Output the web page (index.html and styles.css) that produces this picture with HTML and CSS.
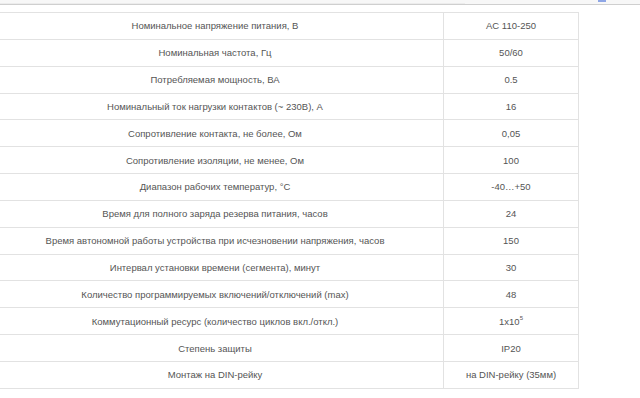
FILE: index.html
```html
<!DOCTYPE html>
<html lang="ru">
<head>
<meta charset="utf-8">
<link rel="stylesheet" href="styles.css">
</head>
<body>
<div class="topbar"><span class="tab"></span><span class="marker"></span></div>
<div class="content">
<table class="specs">
<tr><td>Номинальное напряжение питания, В</td><td>AC 110-250</td></tr>
<tr><td>Номинальная частота, Гц</td><td>50/60</td></tr>
<tr><td>Потребляемая мощность, ВА</td><td>0.5</td></tr>
<tr><td>Номинальный ток нагрузки контактов (~ 230В), А</td><td>16</td></tr>
<tr><td>Сопротивление контакта, не более, Ом</td><td>0,05</td></tr>
<tr><td>Сопротивление изоляции, не менее, Ом</td><td>100</td></tr>
<tr><td>Диапазон рабочих температур, °С</td><td>-40…+50</td></tr>
<tr><td>Время для полного заряда резерва питания, часов</td><td>24</td></tr>
<tr><td>Время автономной работы устройства при исчезновении напряжения, часов</td><td>150</td></tr>
<tr><td>Интервал установки времени (сегмента), минут</td><td>30</td></tr>
<tr><td>Количество программируемых включений/отключений (max)</td><td>48</td></tr>
<tr><td>Коммутационный ресурс (количество циклов вкл./откл.)</td><td>1x10<sup>5</sup></td></tr>
<tr><td>Степень защиты</td><td>IP20</td></tr>
<tr><td>Монтаж на DIN-рейку</td><td>на DIN-рейку (35мм)</td></tr>
</table>
</div>
</body>
</html>
```
FILE: styles.css
```css
html, body {
  margin: 0;
  padding: 0;
  background: #fff;
  overflow: hidden;
}
body {
  font-family: "Liberation Sans", Arial, sans-serif;
  color: #555;
}
.topbar {
  position: relative;
  height: 4px;
  background: #f7f7f7;
  border-bottom: 1px solid #cfcfcf;
}
.tab {
  position: absolute;
  left: 0;
  top: 0;
  width: 465px;
  height: 3px;
  border-bottom: 1px solid #ececec;
}
.marker {
  position: absolute;
  left: 598px;
  top: 0;
  width: 8px;
  height: 2px;
  background: #8ea6e6;
}
.content {
  padding-top: 7px;
}
.specs {
  margin-left: -14px;
  width: 593px;
  border-collapse: collapse;
  font-size: 9.5px;
}
.specs td {
  border: 1px solid #e2e2e2;
  text-align: center;
  height: 26.85px;
  padding: 0 4px;
  box-sizing: border-box;
}
.specs td:first-child {
  width: 457px;
}
.specs sup {
  font-size: 6px;
  vertical-align: top;
  position: relative;
  top: -1px;
}
```
